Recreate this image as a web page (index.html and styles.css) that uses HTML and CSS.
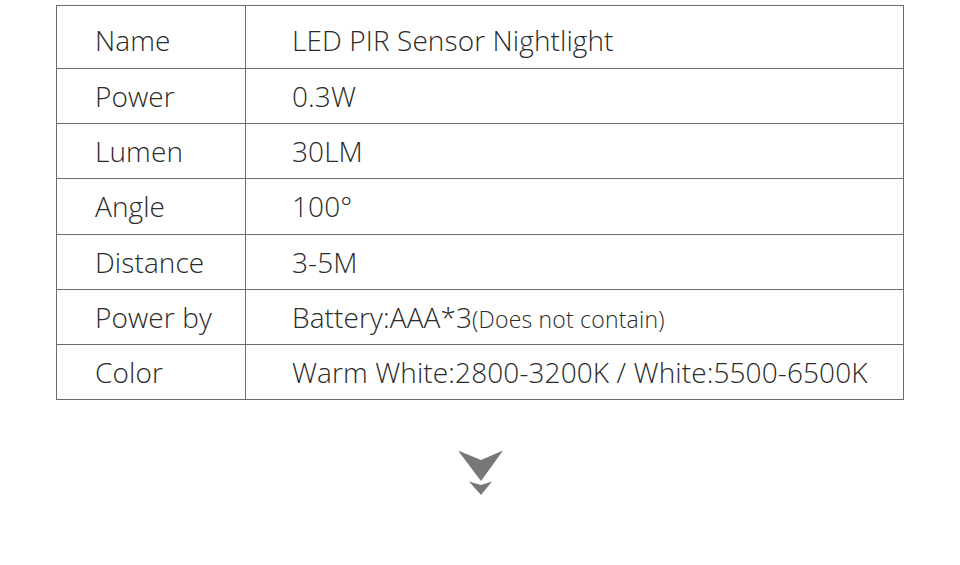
FILE: index.html
```html
<!DOCTYPE html>
<html>
<head>
<meta charset="utf-8">
<link rel="stylesheet" href="styles.css">
</head>
<body>
<div class="page">
  <table class="spec">
    <tr class="first"><td class="k">Name</td><td class="v">LED PIR Sensor Nightlight</td></tr>
    <tr><td class="k">Power</td><td class="v">0.3W</td></tr>
    <tr><td class="k">Lumen</td><td class="v">30LM</td></tr>
    <tr><td class="k">Angle</td><td class="v">100°</td></tr>
    <tr><td class="k">Distance</td><td class="v">3-5M</td></tr>
    <tr><td class="k">Power by</td><td class="v">Battery:AAA*3<span class="small">(Does not contain)</span></td></tr>
    <tr><td class="k">Color</td><td class="v">Warm White:2800-3200K / White:5500-6500K</td></tr>
  </table>
  <div class="arrow">
    <svg width="46" height="48" viewBox="0 0 46 48">
      <polygon points="0,0.5 23,10 45,0.5 23,31" fill="#777"/>
      <polygon points="11,31.5 23,35 34,31.5 23,45" fill="#777"/>
    </svg>
  </div>
</div>
</body>
</html>
```

FILE: styles.css
```css
html, body {
  margin: 0;
  padding: 0;
  background: #fff;
}
.page {
  width: 960px;
  height: 565px;
  padding-top: 5px;
  box-sizing: border-box;
}
.spec {
  margin-left: 56px;
  width: 848px;
  border-collapse: collapse;
  font-family: "Open Sans", "Liberation Sans", sans-serif;
  font-weight: 300;
  font-size: 28px;
  color: #2b2b2b;
}
.spec td {
  border: 1px solid #6b6b6b;
  height: 54.2px;
  padding: 0;
  vertical-align: middle;
  white-space: nowrap;
  letter-spacing: 0.1px;
}
.spec tr.first td {
  height: 56px;
  padding-top: 6px;
}
.spec td.k {
  width: 150px;
  padding-left: 38px;
}
.spec td.v {
  padding-left: 46px;
}
.small {
  font-size: 23px;
  letter-spacing: 0.2px;
}
.arrow {
  display: flex;
  justify-content: center;
  padding-top: 50px;
  padding-left: 1px;
}
```
